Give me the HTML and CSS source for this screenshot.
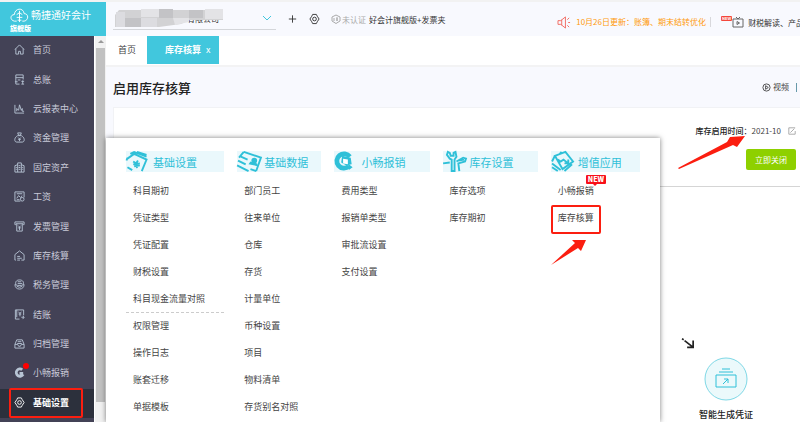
FILE: index.html
```html
<!DOCTYPE html>
<html lang="zh-CN">
<head>
    <meta charset="UTF-8">
    <meta name="viewport" content="width=device-width, initial-scale=1.0">
    <title>启用库存核算</title>
    <link rel="stylesheet" href="styles.css">
</head>
<body>
    <aside class="sidebar">
        <div class="logo">
            <svg class="logo-icon" viewBox="0 0 20 16"><path d="M7 14H4.500C-.5 13 0 7 4.500 7 5 0 14-1 15 6c5 0 5 7 0 8h-2M10 3v12M7 7l3-2 3 2M7 10h6M8 13h4"/></svg>
            <span class="logo-name">畅捷通好会计</span>
            <span class="logo-edition">旗舰版</span>
        </div>
        <div class="side-body">
            <nav class="nav">
                <a href="#"><svg viewBox="0 0 12 12"><path d="M1 6l5-5 5 5M2 5v6h3V8h2v3h3V5"/></svg>首页</a>
                <a href="#"><svg viewBox="0 0 12 12"><path d="M10 6V1H2v10h4M2 4h8M4 6.500h3M1 8.500h3M8 8h3M8 11h3M9.500 7v4"/></svg>总账</a>
                <a href="#"><svg viewBox="0 0 12 12"><path d="M1 2v9h10M3 9V6l2 2 1-6 2 6 1-2v3h2"/></svg>云报表中心</a>
                <a href="#"><svg viewBox="0 0 12 12"><path d="M4 1h4L7 3.500H5zM4 4C0 6 0 11 3 11h6c3 0 3-5-1-7zM4.500 6L6 7.500 7.500 6M4.500 8h3M6 7.500V10"/></svg>资金管理</a>
                <a href="#"><svg viewBox="0 0 12 12"><path d="M4 11V1h4v10M4 3L1 4v7h10V4L8 3M2 6h1M2 8h1M5 4h2M5 6h2M5 8h2M9 6h1M9 8h1"/></svg>固定资产</a>
                <a href="#"><svg viewBox="0 0 12 12"><path d="M7 11H1V1h10v6M3 3h6M3 8l2-3 2 2 2-2M3 9.500h3"/><circle cx="9" cy="9" r="2"/></svg>工资</a>
                <a href="#"><svg viewBox="0 0 12 12"><path d="M2 4H1V1h10v3h-1M2 3h8M3 3v8h6V3M4.500 5L6 6.500 7.500 5M4.500 7.500h3M6 6.500V10"/></svg>发票管理</a>
                <a href="#"><svg viewBox="0 0 12 12"><path d="M8 11h3V5L6 1 1 5v6h1M3.500 7h3M3.500 9h5M3.500 11h3"/></svg>库存核算</a>
                <a href="#"><svg viewBox="0 0 12 12"><path d="M2 6C1 2 4 1 6 1c4 0 5 3 4 5M4 3h4M4 5h5M1 6l3 1h4l3-1c0 3-2 5-5 5S1 9 1 6zM3 8l3 1 3-1"/></svg>税务管理</a>
                <a href="#"><svg viewBox="0 0 12 12"><path d="M6 11H1.500V1h9v6M3 1v8M5 3l1.500 2L8 3M5 5.500h3M6.500 5v3M8 9h3M9.500 7.500L11 9l-1.500 2"/></svg>结账</a>
                <a href="#"><svg viewBox="0 0 12 12"><path d="M1 7l2-5h6l2 5v4H1V7h3l1 2h2l1-2h3M4 4h4M3.500 6h5"/></svg>归档管理</a>
                <a href="#"><svg class="solid" viewBox="0 0 12 12"><path d="M9 3a4 4 0 1 0 1 5M6 7h4"/></svg>小畅报销<i class="dot"></i></a>
                <a href="#" class="active"><svg viewBox="0 0 12 12"><path d="M4 1h4l1 2 2 3-2 3-1 2H4L3 9 1 6l2-3z"/><circle cx="6" cy="6" r="2"/></svg>基础设置</a>
            </nav>
            <div class="scrollbar"><span class="scroll-up"></span><span class="scroll-thumb"></span></div>
        </div>
    </aside>

    <main class="main">
        <header class="topbar">
            <div class="company">
                <select aria-label="账套"><option>有限公司</option></select>
                <svg class="mosaic" viewBox="0 0 110 18">
                    <path fill="#d2d2d4" d="M6 1h104v10H76l-8 4-22 3H2V6z"/>
                    <path fill="#e3e3e6" d="M28 0h18v8H28zM60 9h16v4l-14 3zM92 0h18v10H92z"/>
                    <path fill="#c3c3c6" d="M12 9h16v9H12zM46 0h14v9H46zM76 1h14v8H76z"/>
                    <path fill="#dcdce0" d="M3 3h9v15H3zM28 9h16v9H28z"/>
                </svg>
                <svg class="chevron" viewBox="0 0 8 6"><path d="M0 1l4 4 4-4"/></svg>
            </div>
            <button class="icon-btn" aria-label="新增"><svg viewBox="0 0 12 12"><path d="M6 2v8M2 6h8"/></svg></button>
            <button class="icon-btn" aria-label="设置"><svg viewBox="0 0 12 12"><path d="M4 1h4l1 2 2 3-2 3-1 2H4L3 9 1 6l2-3z"/><circle cx="6" cy="6" r="2"/></svg></button>
            <span class="verify"><svg viewBox="0 0 10 10"><path d="M5 1l4 2v4L5 9.500 1 7V3zM3 4v3M5 4h2M5 6h2M6 4v3"/></svg>未认证</span>
            <span class="edition">好会计旗舰版+发票夹</span>
            <div class="notice">
                <svg class="horn" viewBox="0 0 16 14"><path d="M1 5h3l5-4v12L4 9H1zM5 4v6M11 4l2-2M12 7h2M11 10l2 2"/></svg>
                <a href="#">10月26日更新：账簿、期末结转优化</a>
            </div>
            <div class="news">
                <span class="news-badge">NEW</span>
                <svg viewBox="0 0 12 12"><path d="M1 3h10v8H1zM4 1l2 2 2-2M5 5.500v3L7.500 7z"/></svg>
                <a href="#">财税解读、产品</a>
            </div>
        </header>

        <div class="tabs">
            <a href="#" class="tab">首页</a>
            <a href="#" class="tab current">库存核算<span class="close">x</span></a>
        </div>

        <div class="page-head">
            <h1>启用库存核算</h1>
            <a href="#" class="video"><svg viewBox="0 0 10 10"><circle cx="5" cy="5" r="4"/><path d="M4 3v4l3-2z"/></svg>视频</a>
        </div>

        <section class="card">
            <div class="enable">
                <div class="period"><b>库存启用时间：</b><span>2021-10</span><svg viewBox="0 0 10 10"><path d="M9 5v4H1V1h8M3 7l5-5"/></svg></div>
                <button class="close-btn">立即关闭</button>
            </div>
            <div class="flow">
                <svg class="flow-arrow" viewBox="0 0 16 14"><path d="M1 1l2 1M4 3l9 7M14 3v8H7"/></svg>
                <div class="step">
                    <svg viewBox="0 0 44 44">
                        <circle cx="22" cy="22" r="21"/>
                        <path d="M18 12h8M15 15h14M12 18h20v12H12zM19 27l5-5M20 22h4v4"/>
                    </svg>
                    <span>智能生成凭证</span>
                </div>
            </div>
        </section>
    </main>

    <div class="menu">
        <div class="menu-col">
            <h2><svg viewBox="0 0 22 22"><path d="M1 8l7-5 13 6-5 12M4 3l4-2 13 5M11 1l10 3M1 7l-1 3M1 17l5 3M7 11l3 2 2-3M7 14l7-1M8 16l6-1M10 13l1 5"/></svg>基础设置</h2>
            <ul class="group">
                <li><a href="#">科目期初</a></li>
                <li><a href="#">凭证类型</a></li>
                <li><a href="#">凭证配置</a></li>
                <li><a href="#">财税设置</a></li>
                <li><a href="#">科目现金流量对照</a></li>
            </ul>
            <ul>
                <li><a href="#">权限管理</a></li>
                <li><a href="#">操作日志</a></li>
                <li><a href="#">账套迁移</a></li>
                <li><a href="#">单据模板</a></li>
            </ul>
        </div>
        <div class="menu-col">
            <h2><svg class="wide" viewBox="0 0 26 22"><path d="M7 1l18 6-5 14M7 1L2 7M4 6l7 3M1 10l8 4M0 15l12 6M20 21l-6-2"/><circle class="fill" cx="18" cy="10" r="3"/><path class="fill" d="M12 14l10 2-1-3-7-2z"/></svg>基础数据</h2>
            <ul>
                <li><a href="#">部门员工</a></li>
                <li><a href="#">往来单位</a></li>
                <li><a href="#">仓库</a></li>
                <li><a href="#">存货</a></li>
                <li><a href="#">计量单位</a></li>
                <li><a href="#">币种设置</a></li>
                <li><a href="#">项目</a></li>
                <li><a href="#">物料清单</a></li>
                <li><a href="#">存货别名对照</a></li>
            </ul>
        </div>
        <div class="menu-col">
            <h2><svg viewBox="0 0 22 22"><path class="thick" d="M16 6A7.500 7.500 0 1 0 15 16"/><path class="fill" d="M8 5l9 2 1 7-6 1-5-3zM14 13l5 4-4 3z"/><path class="hole" d="M9 8l5 1v5l-5-1z"/></svg>小畅报销</h2>
            <ul>
                <li><a href="#">费用类型</a></li>
                <li><a href="#">报销单类型</a></li>
                <li><a href="#">审批流设置</a></li>
                <li><a href="#">支付设置</a></li>
            </ul>
        </div>
        <div class="menu-col">
            <h2><svg class="wide" viewBox="0 0 26 22"><path d="M5 1L4 4l3 4 2 1v12h3V9l2-3-1-5-2 1v3H8L7 2zM0 13l7-1M14 11l7-4 3 1-1 3-7 2 1 8M16 10l6-1"/></svg>库存设置</h2>
            <ul>
                <li><a href="#">库存选项</a></li>
                <li><a href="#">库存期初</a></li>
            </ul>
        </div>
        <div class="menu-col">
            <h2><svg class="wide" viewBox="0 0 26 22"><path d="M4 5l11-4 8 10-11 8zM9 3l2-2M4 5l-3 6M1 13l9 7M1 17l6 4M7 9l3 2 3-2 5 4M18 9v4h-4M14 21l8-7"/></svg>增值应用</h2>
            <ul>
                <li><a href="#">小畅报销</a><span class="bubble">NEW</span></li>
                <li><a href="#" class="marked">库存核算</a></li>
            </ul>
            <svg class="pointer" viewBox="0 0 36 26"><path d="M0 25L24 3 21 0H35L30 11 27 8z"/></svg>
        </div>
    </div>
    <svg class="pointer-date" viewBox="0 0 68 36"><path d="M0 33L49 7 52 2 67 1 59 12 55 10 1 34z"/></svg>
</body>
</html>
```
FILE: styles.css
```css
*,
*::after {
    box-sizing: border-box;
}
body {
    margin: 0;
    height: 100vh;
    display: flex;
    position: relative;
    overflow: hidden;
    font-family: "Noto Sans CJK SC", sans-serif;
    font-size: 9px;
    color: #444;
    background: #f8f9fe;
}
a {
    color: inherit;
    text-decoration: none;
}
h1, h2, ul {
    margin: 0;
    padding: 0;
    list-style: none;
}
svg {
    flex: none;
    fill: none;
    stroke: currentColor;
    overflow: visible;
}
button {
    font-family: inherit;
    border: none;
    padding: 0;
    cursor: pointer;
}

/* sidebar */
.sidebar {
    flex: none;
    width: 106px;
    display: flex;
    flex-direction: column;
}
.logo {
    height: 36px;
    padding: 5px 0 0 10px;
    border-top: 2px solid #f2f2f2;
    background: #41c7dd;
    color: #fff;
    display: grid;
    grid-template-columns: 21px 1fr;
    grid-template-rows: 16px 10px;
    align-items: center;
}
.logo-icon {
    width: 19px;
    height: 15px;
}
.logo-name {
    font-size: 10px;
    line-height: 16px;
}
.logo-edition {
    grid-column: 1 / 3;
    font-size: 7px;
    line-height: 10px;
    font-weight: 900;
}
.side-body {
    flex: 1;
    min-height: 0;
    display: flex;
}
.nav {
    flex: 1;
    display: flex;
    flex-direction: column;
    padding-bottom: 4px;
    background: #434256;
    color: #c8cad8;
}
.nav a {
    flex: 1;
    display: flex;
    align-items: center;
    padding: 0 0 2px 14px;
    gap: 8px;
    position: relative;
}
.nav svg {
    width: 11px;
    height: 11px;
    stroke: #b7c4d4;
}
.nav .solid {
    stroke-width: 3;
}
.nav .active {
    background: #2c303c;
    color: #fff;
    font-weight: 700;
}
.nav .active svg {
    stroke: #fff;
}
.nav .active::after {
    content: "";
    position: absolute;
    inset: -1px 11px 0 9px;
    border: 2px solid #fb1e10;
    border-radius: 2px;
}
.dot {
    position: absolute;
    left: 23px;
    top: 4px;
    width: 6px;
    height: 6px;
    border-radius: 50%;
    background: #f00;
}
.scrollbar {
    width: 12px;
    padding: 4px 1px 0;
    display: flex;
    flex-direction: column;
    align-items: center;
    background: #f1f1f1;
    border-left: 1px solid #fff;
}
.scroll-up {
    border: 3px solid transparent;
    border-top: 0;
    border-bottom-color: #999;
    margin-bottom: 5px;
}
.scroll-thumb {
    width: 100%;
    flex: 1;
    margin-bottom: 20px;
    background: #c1c1c1;
}

/* top bar */
.main {
    flex: 1;
    min-width: 0;
    display: flex;
    flex-direction: column;
}
.topbar {
    height: 36px;
    display: flex;
    align-items: center;
    padding-left: 7px;
    border-top: 2px solid #f2f2f2;
    font-size: 8px;
    color: #333;
    white-space: nowrap;
    overflow: hidden;
}
.company {
    flex: none;
    width: 163px;
    height: 21px;
    position: relative;
    border-bottom: 1px solid #d4d6da;
}
.company select {
    width: 100%;
    height: 20px;
    padding: 0 0 0 74px;
    border: none;
    appearance: none;
    background: none;
    font-family: inherit;
    font-size: 8px;
    color: #333;
}
.mosaic {
    position: absolute;
    left: 0;
    top: 0;
    width: 110px;
    height: 18px;
    stroke: none;
}
.chevron {
    position: absolute;
    right: 5px;
    top: 6px;
    width: 8px;
    height: 6px;
    stroke: #41c7dd;
}
.icon-btn {
    flex: none;
    height: 12px;
    margin-left: 11px;
    background: none;
    color: #333;
}
.icon-btn svg {
    display: block;
    width: 11px;
    height: 12px;
}
.verify {
    display: flex;
    align-items: center;
    gap: 1px;
    margin-left: 11px;
    color: #aaa;
}
.verify svg {
    width: 10px;
    height: 10px;
}
.edition {
    margin-left: 3px;
}
.notice {
    display: flex;
    align-items: center;
    gap: 4px;
    margin-left: auto;
    padding-top: 6px;
    color: #ff9a0c;
}
.notice a {
    padding-right: 4px;
    line-height: 10px;
    border-right: 1px solid #d8d8dc;
}
.horn {
    width: 15px;
    height: 13px;
    stroke: #f1685e;
}
.news {
    flex: none;
    width: 79px;
    display: flex;
    align-items: center;
    padding-top: 6px;
    margin-left: 10px;
}
.news svg {
    width: 12px;
    height: 12px;
    margin-right: 4px;
    stroke: #666;
}
.news-badge {
    margin-bottom: 8px;
    padding: 0 1px;
    font-size: 4px;
    line-height: 5px;
    font-weight: 700;
    color: #fff;
    background: #f4473c;
    border-radius: 1px;
}

/* tabs */
.tabs {
    height: 31px;
    display: flex;
    align-items: flex-start;
    background: #fff;
    border-bottom: 2px solid #f3f3f4;
}
.tab {
    padding: 0 11px 0 12px;
    font-size: 9px;
    line-height: 28px;
}
.tab.current {
    padding: 0 8px 0 18px;
    background: #41c7dd;
    color: #fff;
    font-weight: 700;
}
.close {
    margin-left: 5px;
    font-weight: 400;
}

/* page */
.page-head {
    height: 40px;
    display: flex;
    align-items: center;
    justify-content: space-between;
    padding: 0 3px 0 7px;
}
.page-head h1 {
    font-size: 13px;
    font-weight: 500;
    color: #222;
}
.video {
    display: flex;
    align-items: center;
    gap: 2px;
    padding-right: 7px;
    font-size: 8px;
    line-height: 8px;
    border-right: 1px solid #69a;
}
.video svg {
    width: 9px;
    height: 9px;
}
.card {
    flex: 1;
    margin-left: 7px;
    background: #fff;
    border-top: 1px solid #f1f2f5;
    border-left: 1px solid #f1f2f5;
    display: flex;
    flex-direction: column;
}
.enable {
    height: 79px;
    padding: 17px 4px 0 0;
    display: flex;
    flex-direction: column;
    align-items: flex-end;
    gap: 12px;
    border-bottom: 1px solid #d5d5d5;
    font-size: 8px;
}
.period {
    display: flex;
    align-items: center;
    line-height: 12px;
}
.period b {
    font-weight: 500;
    color: #222;
}
.period svg {
    width: 8px;
    height: 8px;
    margin-left: 7px;
    stroke: #999;
}
.close-btn {
    width: 50px;
    height: 21px;
    border-radius: 2px;
    background: #8ed000;
    color: #fff;
    font-size: 8px;
}
.flow {
    flex: 1;
    display: flex;
    justify-content: flex-end;
    align-items: flex-end;
    padding-right: 47px;
}
.flow-arrow {
    width: 14px;
    height: 12px;
    margin: 0 4px 72px 0;
    stroke: #222;
    stroke-width: 2;
}
.step {
    display: flex;
    flex-direction: column;
    align-items: center;
    gap: 6px;
    font-weight: 500;
    line-height: 15px;
    color: #222;
}
.step svg {
    width: 44px;
    height: 44px;
    stroke: #2fc0d8;
}
.step circle {
    fill: #ebf9fb;
    stroke: #7fd8e6;
}

/* settings menu */
.menu {
    position: absolute;
    left: 106px;
    right: 140px;
    top: 138px;
    bottom: 0;
    padding: 13px 20px 0;
    display: grid;
    grid-template-columns: 98fr 84fr 95fr 95fr 89fr;
    gap: 13px;
    background: #fff;
    box-shadow: 0 0 5px rgba(0, 0, 0, 0.5);
}
.menu-col {
    position: relative;
}
.menu h2 {
    height: 21px;
    margin-bottom: 6px;
    display: flex;
    align-items: center;
    font-size: 11px;
    font-weight: 400;
    white-space: nowrap;
    color: #2fc0d8;
    background: #eaf8fc;
}
.menu h2 svg {
    width: 22px;
    height: 21px;
    margin-right: 5px;
    stroke-width: 2;
}
.menu h2 .wide {
    width: 25px;
    margin-right: 2px;
}
.menu .fill {
    fill: currentColor;
    stroke: none;
}
.menu .thick {
    stroke-width: 5;
}
.menu .hole {
    fill: #fff;
    stroke: none;
}
.menu li {
    height: 27px;
    padding-left: 7px;
    line-height: 26px;
    white-space: nowrap;
    position: relative;
}
.group {
    height: 135px;
    border-bottom: 1px dashed #ccc;
}
.marked::after {
    content: "";
    position: absolute;
    left: 0;
    top: 0;
    width: 50px;
    height: 29px;
    border: 2px solid #fb1e10;
    border-radius: 2px;
}
.bubble {
    position: absolute;
    left: 35px;
    top: -3px;
    padding: 0 2px;
    font-size: 7px;
    line-height: 9px;
    font-weight: 900;
    color: #fff;
    background: #f8101a;
    border-radius: 1px;
}
.bubble::after {
    content: "";
    position: absolute;
    left: 7px;
    top: 9px;
    border: 2px solid transparent;
    border-top-color: #f8101a;
}
.pointer {
    position: absolute;
    left: 0;
    top: 89px;
    width: 36px;
    height: 26px;
    fill: #fb1e10;
    stroke: none;
}
.pointer-date {
    position: absolute;
    right: 54px;
    top: 135px;
    width: 68px;
    height: 36px;
    fill: #fb1e10;
    stroke: none;
}
```
